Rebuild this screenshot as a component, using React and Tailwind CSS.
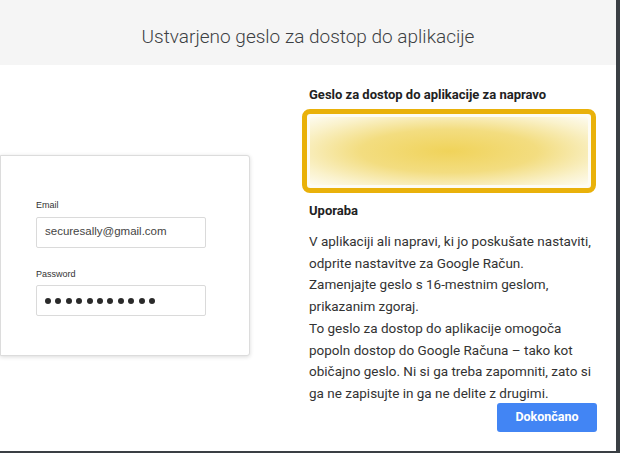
import React from 'react';

const font = { fontFamily: 'Roboto, "Liberation Sans", sans-serif' };
const arial = { fontFamily: '"Liberation Sans", Arial, sans-serif' };

function LoginCard() {
    return (
        <div className="w-[250px] h-[201px] bg-white border border-[#dcdcdc] rounded-r-[3px] shadow-[0_1px_4px_rgba(0,0,0,0.15)] pl-[35px] pt-[43px]">
            <div className="text-[9px] font-medium text-[#333] mb-[4px]" style={arial}>Email</div>
            <div className="w-[170px] h-[31px] border border-[#dadada] rounded-[2px] flex items-center pl-[8px] text-[11.5px] text-[#444]" style={arial}>
                securesally@gmail.com
            </div>
            <div className="text-[9px] font-medium text-[#333] mt-[20px] mb-[4px]" style={arial}>Password</div>
            <div className="w-[170px] h-[31px] border border-[#dadada] rounded-[2px] flex items-center pl-[8px] gap-[4.4px]">
                {Array.from({ length: 11 }).map((_, i) => (
                    <span key={i} className="w-[6px] h-[6px] rounded-full bg-[#2a2a2a]" />
                ))}
            </div>
        </div>
    );
}

export default function App() {
    return (
        <div className="w-[620px] h-[453px] bg-[#3a3f44] overflow-hidden" style={font}>
            <div className="w-[616px] h-[451px] bg-white flex flex-col">
                <div className="h-[65px] bg-[#f5f5f5] flex items-center justify-center pt-[9px]">
                    <h1 className="text-[19px] font-light text-[#3c4043]">Ustvarjeno geslo za dostop do aplikacije</h1>
                </div>
                <div className="flex flex-1">
                    <div className="w-[302px] pt-[90px]">
                        <LoginCard />
                    </div>
                    <div className="flex-1 flex flex-col pt-[20px] pr-[19px]">
                        <div className="pl-[7px] text-[13px] font-bold text-[#222]">Geslo za dostop do aplikacije za napravo</div>
                        <div className="mt-[4px] w-[294px] h-[84px] border-[5px] border-[#e9b10a] rounded-[8px] p-[3px] bg-[#fdfcf5]">
                            <div className="w-full h-full rounded-[3px] bg-[radial-gradient(ellipse_at_center,#f0d35a_0%,#f3dd80_45%,#faf2cc_80%,#fdfbf0_100%)]" />
                        </div>
                        <div className="pl-[7px] mt-[8px] text-[13px] font-bold text-[#222]">Uporaba</div>
                        <p className="pl-[7px] mt-[11px] text-[13.5px] leading-[21.7px] text-[#333]">
                            V aplikaciji ali napravi, ki jo poskušate nastaviti,<br />
                            odprite nastavitve za Google Račun.<br />
                            Zamenjajte geslo s 16-mestnim geslom,<br />
                            prikazanim zgoraj.<br />
                            To geslo za dostop do aplikacije omogoča<br />
                            popoln dostop do Google Računa – tako kot<br />
                            običajno geslo. Ni si ga treba zapomniti, zato si<br />
                            ga ne zapisujte in ga ne delite z drugimi.
                        </p>
                        <div className="flex justify-end mt-[-2px]">
                            <button className="w-[100px] h-[29px] bg-[#4285f4] rounded-[3px] text-white text-[12.5px] font-bold">Dokončano</button>
                        </div>
                    </div>
                </div>
            </div>
        </div>
    );
}
